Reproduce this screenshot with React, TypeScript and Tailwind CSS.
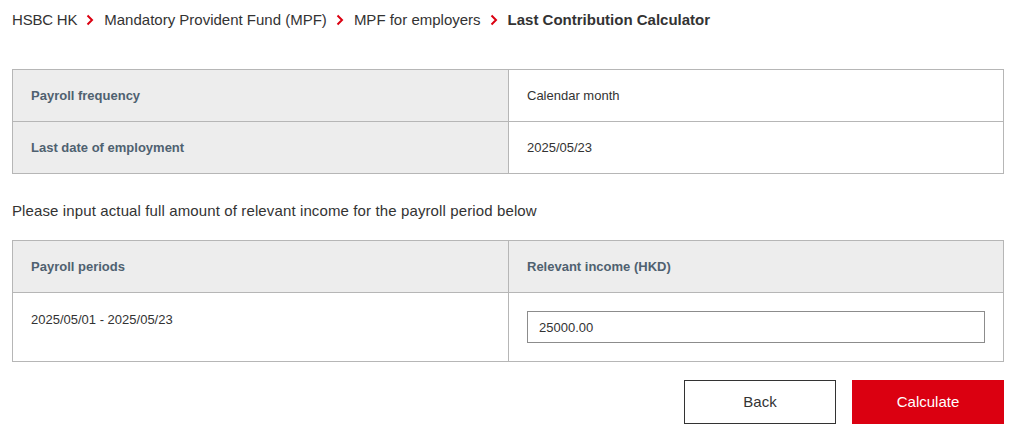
import React from 'react';

const font = { fontFamily: '"Liberation Sans", Arial, sans-serif' };

// 面包屑分隔箭头
function Chevron() {
  return (
    <svg width="8" height="12" viewBox="0 0 8 12" className="ml-[9px] mr-[10px] shrink-0">
      <path d="M1.5 1.5 L6 6 L1.5 10.5" fill="none" stroke="#db0011" strokeWidth="2" />
    </svg>
  );
}

function InfoRow({ label, value, last }: { label: string; value: string; last?: boolean }) {
  return (
    <div className={`grid grid-cols-[496px_1fr] ${last ? '' : 'border-b border-[#b6b6b6]'}`}>
      <div className="bg-[#ededed] border-r border-[#b6b6b6] h-[51px] flex items-center pl-[18px] text-[13px] font-bold text-[#4f6170]">
        {label}
      </div>
      <div className="h-[51px] flex items-center pl-[18px] text-[13px] text-[#333]">{value}</div>
    </div>
  );
}

export default function App() {
  return (
    <div className="bg-white w-[1028px] h-[438px] px-3 pt-[9px]" style={font}>
      {/* 面包屑 */}
      <nav className="flex items-center text-[15px] text-[#333] h-[22px]">
        <span className="tracking-[-0.2px]">HSBC HK</span>
        <Chevron />
        <span>Mandatory Provident Fund (MPF)</span>
        <Chevron />
        <span>MPF for employers</span>
        <Chevron />
        <span className="font-bold">Last Contribution Calculator</span>
      </nav>

      {/* 基本信息 */}
      <div className="mt-[38px] w-[992px] border border-[#b6b6b6]">
        <InfoRow label="Payroll frequency" value="Calendar month" />
        <InfoRow label="Last date of employment" value="2025/05/23" last />
      </div>

      <p className="mt-[27px] text-[15px] tracking-[0.12px] text-[#333] leading-5">
        Please input actual full amount of relevant income for the payroll period below
      </p>

      {/* 收入表 */}
      <div className="mt-[19px] w-[992px] border border-[#b6b6b6]">
        <div className="grid grid-cols-[496px_1fr] border-b border-[#b6b6b6] bg-[#ededed]">
          <div className="border-r border-[#b6b6b6] h-[51px] flex items-center pl-[18px] text-[13px] font-bold text-[#4f6170]">
            Payroll periods
          </div>
          <div className="h-[51px] flex items-center pl-[18px] text-[13px] font-bold text-[#4f6170]">
            Relevant income (HKD)
          </div>
        </div>
        <div className="grid grid-cols-[496px_1fr]">
          <div className="border-r border-[#b6b6b6] h-[68px] pl-[18px] pt-[19px] text-[13px] text-[#333] leading-4">
            2025/05/01 - 2025/05/23
          </div>
          <div className="h-[68px] pl-[18px] pr-[18px] pt-[18px]">
            <input
              defaultValue="25000.00"
              className="w-full h-[32px] border border-[#8c8c8c] px-[11px] text-[13px] text-[#333] outline-none"
              style={font}
            />
          </div>
        </div>
      </div>

      {/* 按钮 */}
      <div className="mt-[18px] w-[992px] flex justify-end gap-4">
        <button className="w-[152px] h-[44px] border border-[#333] bg-white text-[15px] text-[#333]">Back</button>
        <button className="w-[152px] h-[44px] bg-[#db0011] text-[15px] text-white">Calculate</button>
      </div>
    </div>
  );
}
